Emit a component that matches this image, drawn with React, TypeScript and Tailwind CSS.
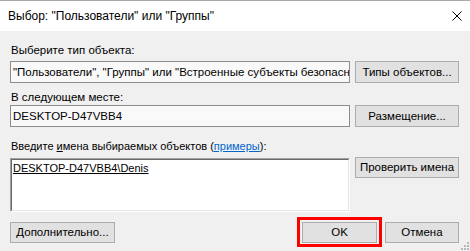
import React from "react";

function Btn({ label, className = "" }: { label: React.ReactNode; className?: string }) {
  return (
    <div
      className={`flex h-[21px] shrink-0 items-center justify-center border border-[#adadad] bg-[#e1e1e1] text-black ${className}`}
    >
      {label}
    </div>
  );
}

function ReadOnlyField({ value }: { value: string }) {
  return (
    <div className="flex h-[22px] min-w-0 flex-1 items-center overflow-hidden border border-[#8c8c8c] bg-[#f9f9f9] pl-[2px]">
      <span className="block min-w-0 overflow-hidden whitespace-nowrap">{value}</span>
    </div>
  );
}

export default function App() {
  return (
    <div className="relative h-[251px] w-[470px] overflow-hidden bg-[#f0f0f0] font-['Liberation_Sans',Arial,sans-serif] text-[11.5px] leading-[15px] text-black">
      {/* title bar */}
      <div className="flex h-[31px] items-center justify-between border-t border-[#aaaaaa] bg-white pl-[8px] pr-[8px] text-[12px]">
        <span>Выбор: "Пользователи" или "Группы"</span>
        <svg width="10" height="10" viewBox="0 0 10 10" className="shrink-0">
          <path d="M0.5 0.5 L9.5 9.5 M9.5 0.5 L0.5 9.5" stroke="#000" strokeWidth="1" />
        </svg>
      </div>

      <div className="flex flex-col pl-[10px] pr-[11px]">
        <div className="mt-[12px] h-[15px] pl-[1px]">Выберите тип объекта:</div>
        <div className="mt-[3px] flex gap-[5px]">
          <ReadOnlyField value={'"Пользователи", "Группы" или "Встроенные субъекты безопасности"'} />
          <Btn label="Типы объектов..." className="h-[22px] w-[104px]" />
        </div>

        <div className="mt-[7px] h-[15px] pl-[1px]">В следующем месте:</div>
        <div className="flex gap-[5px]">
          <ReadOnlyField value="DESKTOP-D47VBB4" />
          <Btn label="Размещение..." className="h-[22px] w-[104px]" />
        </div>

        <div className="mt-[12px] h-[15px] pl-[1px] text-[11px]">
          Введите <span className="underline">и</span>мена выбираемых объектов (
          <span className="text-[#0066cc] underline">примеры</span>):
        </div>
        <div className="mt-[4px] flex items-start gap-[5px]">
          <div className="h-[54px] min-w-0 flex-1 border border-t-[#a0a0a0] border-l-[#a0a0a0] border-r-white border-b-white">
            <div className="h-full border border-t-[#696969] border-l-[#696969] border-r-[#e3e3e3] border-b-[#e3e3e3] bg-white pl-[1px] pt-[1px] text-[11px]">
              <span className="underline">DESKTOP-D47VBB4\Denis</span>
            </div>
          </div>
          <Btn label="Проверить имена" className="-mt-[1px] w-[104px]" />
        </div>

        <div className="mt-[5px] flex items-center">
          <Btn label="Дополнительно..." className="w-[105px]" />
          <div className="ml-auto flex border-[3px] border-[#ff0000] px-[2px] pb-[1px] pt-[2px]">
            <Btn label="OK" className="w-[75px]" />
          </div>
          <Btn label="Отмена" className="ml-[3px] w-[74px]" />
        </div>
      </div>

      {/* size grip */}
      <svg width="8" height="8" viewBox="0 0 8 8" className="absolute bottom-[1px] right-[1px]">
        <rect x="6" y="0" width="2" height="2" fill="#b8b8b8" />
        <rect x="3" y="3" width="2" height="2" fill="#b8b8b8" />
        <rect x="6" y="3" width="2" height="2" fill="#b8b8b8" />
        <rect x="0" y="6" width="2" height="2" fill="#b8b8b8" />
        <rect x="3" y="6" width="2" height="2" fill="#b8b8b8" />
        <rect x="6" y="6" width="2" height="2" fill="#b8b8b8" />
      </svg>
    </div>
  );
}
